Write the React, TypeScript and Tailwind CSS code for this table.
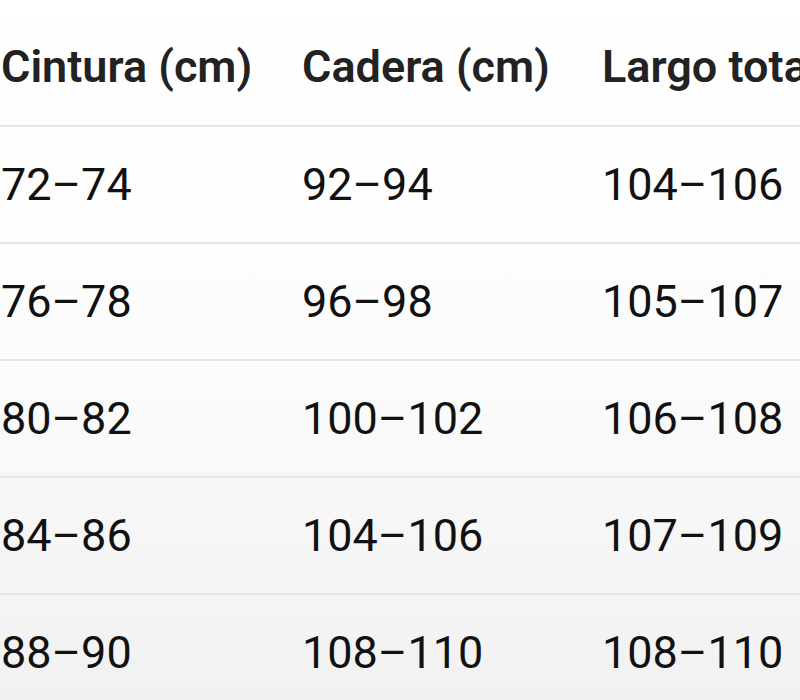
import React from "react";

const rows = [
  ["72–74", "92–94", "104–106"],
  ["76–78", "96–98", "105–107"],
  ["80–82", "100–102", "106–108"],
  ["84–86", "104–106", "107–109"],
  ["88–90", "108–110", "108–110"],
];

export default function App() {
  return (
    <div
      className="w-[800px] h-[700px] overflow-hidden bg-gradient-to-b from-white via-[#fcfcfc] to-[#f1f1f1]"
      style={{ fontFamily: "Roboto, 'Liberation Sans', sans-serif" }}
    >
      <div className="grid grid-cols-[302px_300px_300px] h-[127px] items-center pt-[8px] border-b-2 border-[#e6e6e6] whitespace-nowrap text-[45px] font-semibold text-[#222]">
        <div className="pl-[1px]">Cintura (cm)</div>
        <div>Cadera (cm)</div>
        <div>Largo total (cm)</div>
      </div>
      {rows.map((r, i) => (
        <div
          key={i}
          className="grid grid-cols-[302px_300px_300px] h-[117px] items-center border-b-2 border-[#e6e6e6] whitespace-nowrap text-[45px] text-[#111]"
        >
          <div className="pl-[1px]">{r[0]}</div>
          <div>{r[1]}</div>
          <div>{r[2]}</div>
        </div>
      ))}
    </div>
  );
}
